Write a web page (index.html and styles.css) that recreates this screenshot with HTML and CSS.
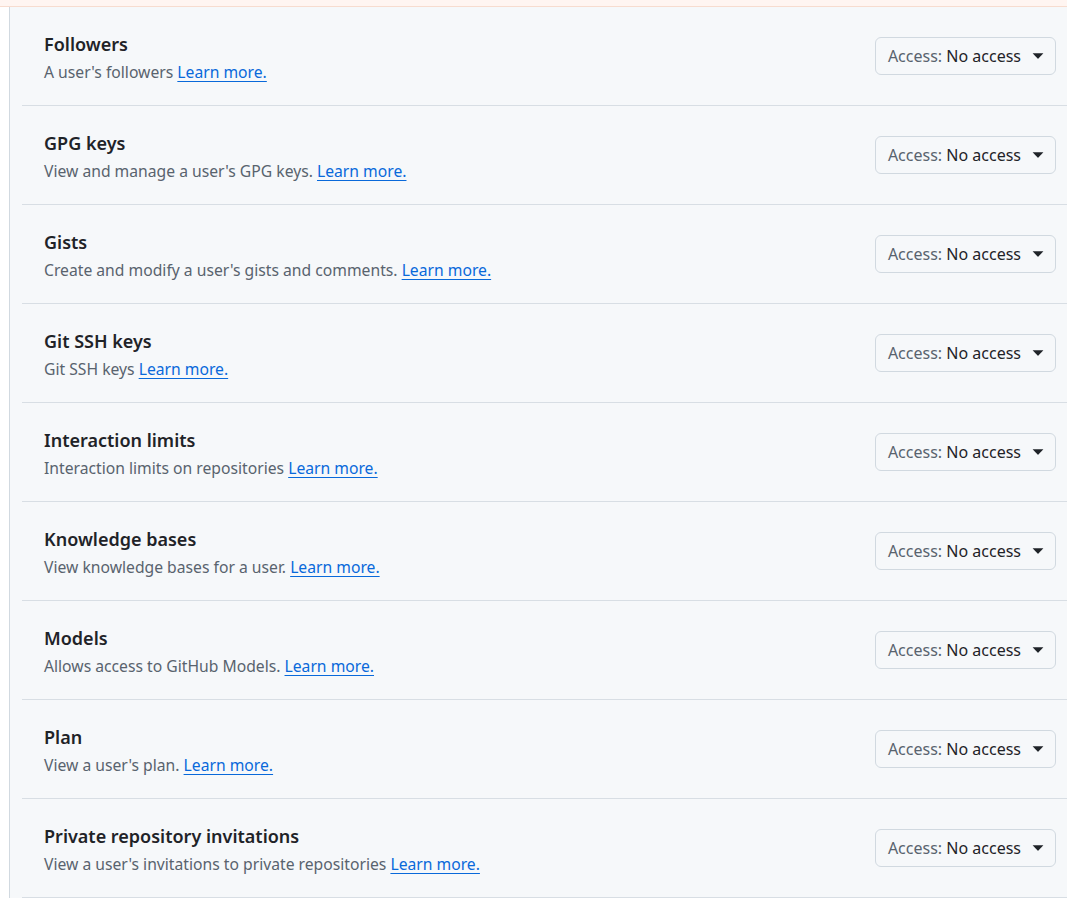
FILE: index.html
```html
<!DOCTYPE html>
<html lang="en">
<head>
<meta charset="utf-8">
<title>Permissions</title>
<link rel="stylesheet" href="styles.css">
</head>
<body>
<div class="topband"></div>
<div class="layout">
  <div class="gutter"></div>
  <div class="panel">
    <div class="row">
      <div class="info"><div class="title">Followers</div><div class="desc">A user's followers <a href="#">Learn more.</a></div></div>
      <button class="select"><span class="lbl">Access:</span>&nbsp;<span class="val">No access</span><svg viewBox="0 0 12 8" width="12" height="8"><path d="M0.6 1.2 L11.4 1.2 L6.4 6.6 Q6 7 5.6 6.6 Z"/></svg></button>
    </div>
    <div class="row">
      <div class="info"><div class="title">GPG keys</div><div class="desc">View and manage a user's GPG keys. <a href="#">Learn more.</a></div></div>
      <button class="select"><span class="lbl">Access:</span>&nbsp;<span class="val">No access</span><svg viewBox="0 0 12 8" width="12" height="8"><path d="M0.6 1.2 L11.4 1.2 L6.4 6.6 Q6 7 5.6 6.6 Z"/></svg></button>
    </div>
    <div class="row">
      <div class="info"><div class="title">Gists</div><div class="desc">Create and modify a user's gists and comments. <a href="#">Learn more.</a></div></div>
      <button class="select"><span class="lbl">Access:</span>&nbsp;<span class="val">No access</span><svg viewBox="0 0 12 8" width="12" height="8"><path d="M0.6 1.2 L11.4 1.2 L6.4 6.6 Q6 7 5.6 6.6 Z"/></svg></button>
    </div>
    <div class="row">
      <div class="info"><div class="title">Git SSH keys</div><div class="desc">Git SSH keys <a href="#">Learn more.</a></div></div>
      <button class="select"><span class="lbl">Access:</span>&nbsp;<span class="val">No access</span><svg viewBox="0 0 12 8" width="12" height="8"><path d="M0.6 1.2 L11.4 1.2 L6.4 6.6 Q6 7 5.6 6.6 Z"/></svg></button>
    </div>
    <div class="row">
      <div class="info"><div class="title">Interaction limits</div><div class="desc">Interaction limits on repositories <a href="#">Learn more.</a></div></div>
      <button class="select"><span class="lbl">Access:</span>&nbsp;<span class="val">No access</span><svg viewBox="0 0 12 8" width="12" height="8"><path d="M0.6 1.2 L11.4 1.2 L6.4 6.6 Q6 7 5.6 6.6 Z"/></svg></button>
    </div>
    <div class="row">
      <div class="info"><div class="title">Knowledge bases</div><div class="desc">View knowledge bases for a user. <a href="#">Learn more.</a></div></div>
      <button class="select"><span class="lbl">Access:</span>&nbsp;<span class="val">No access</span><svg viewBox="0 0 12 8" width="12" height="8"><path d="M0.6 1.2 L11.4 1.2 L6.4 6.6 Q6 7 5.6 6.6 Z"/></svg></button>
    </div>
    <div class="row">
      <div class="info"><div class="title">Models</div><div class="desc">Allows access to GitHub Models. <a href="#">Learn more.</a></div></div>
      <button class="select"><span class="lbl">Access:</span>&nbsp;<span class="val">No access</span><svg viewBox="0 0 12 8" width="12" height="8"><path d="M0.6 1.2 L11.4 1.2 L6.4 6.6 Q6 7 5.6 6.6 Z"/></svg></button>
    </div>
    <div class="row">
      <div class="info"><div class="title">Plan</div><div class="desc">View a user's plan. <a href="#">Learn more.</a></div></div>
      <button class="select"><span class="lbl">Access:</span>&nbsp;<span class="val">No access</span><svg viewBox="0 0 12 8" width="12" height="8"><path d="M0.6 1.2 L11.4 1.2 L6.4 6.6 Q6 7 5.6 6.6 Z"/></svg></button>
    </div>
    <div class="row">
      <div class="info"><div class="title">Private repository invitations</div><div class="desc">View a user's invitations to private repositories <a href="#">Learn more.</a></div></div>
      <button class="select"><span class="lbl">Access:</span>&nbsp;<span class="val">No access</span><svg viewBox="0 0 12 8" width="12" height="8"><path d="M0.6 1.2 L11.4 1.2 L6.4 6.6 Q6 7 5.6 6.6 Z"/></svg></button>
    </div>
  </div>
</div>
</body>
</html>
```

FILE: styles.css
```css
* { box-sizing: border-box; }
html, body { margin: 0; padding: 0; background: #ffffff; }
body {
  font-family: "Noto Sans", "Open Sans", sans-serif;
  color: #1f2328;
  overflow: hidden;
}
.topband {
  height: 7px;
  background: #fff5f1;
  border-bottom: 1px solid #f7dccf;
}
.layout {
  display: flex;
}
.gutter {
  width: 9px;
  flex: none;
  background: #ffffff;
}
.panel {
  flex: 1;
  background: #f6f8fa;
  border-left: 1px solid #d1d9e0;
  padding-left: 12px;
}
.row {
  display: flex;
  align-items: center;
  justify-content: space-between;
  height: 99px;
  padding: 1px 11px 0 22px;
  border-bottom: 1px solid #d8dee4;
}
.info { display: flex; flex-direction: column; gap: 4px; }
.title {
  font-size: 18px;
  font-weight: 600;
  line-height: 26px;
  color: #1f2328;
}
.desc {
  font-size: 15.7px;
  line-height: 22px;
  color: #59636e;
}
.desc a {
  color: #0969da;
  text-decoration: underline;
  text-underline-offset: 3px;
}
.select {
  display: flex;
  align-items: center;
  height: 38px;
  margin-top: -1px;
  padding: 0 11px 0 12px;
  border: 1px solid #d1d9e0;
  border-radius: 6px;
  background: #f6f8fa;
  font-family: inherit;
  font-size: 16px;
  cursor: pointer;
}
.lbl { color: #59636e; font-weight: 400; }
.val { color: #1f2328; font-weight: 400; }
.select svg { margin-left: 11px; fill: #1f2328; }
```
